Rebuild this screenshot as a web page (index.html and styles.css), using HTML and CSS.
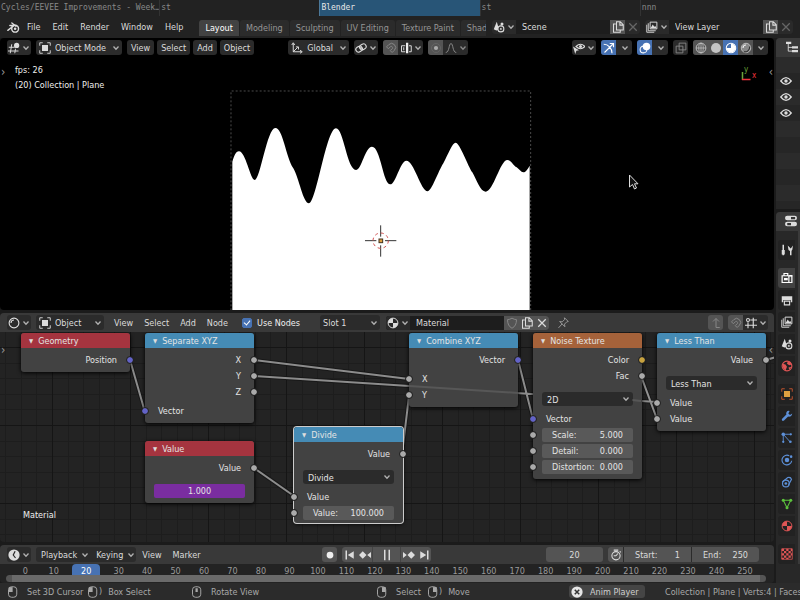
FILE: index.html
```html
<!DOCTYPE html>
<html lang="en">
<head>
<meta charset="utf-8">
<title>Blender</title>
<link rel="stylesheet" href="styles.css">
</head>
<body>
<svg class="defs" aria-hidden="true">
  <symbol id="chev" viewBox="0 0 8 8"><path d="M1.500 2.500 4 5.200 6.500 2.500" fill="none" stroke="currentColor" stroke-width="1.300"/></symbol>
  <symbol id="logo" viewBox="0 0 16 16"><path d="M1 11.500 8.500 5.500H3.500M6 2.500l5 4" fill="none" stroke="currentColor" stroke-width="1.700" stroke-linecap="round"/><circle cx="10" cy="9.500" r="4.200" fill="none" stroke="currentColor" stroke-width="1.800"/><circle cx="10" cy="9.500" r="1.600" fill="currentColor"/></symbol>
  <symbol id="view3d" viewBox="0 0 16 16"><path d="M1 7h8M0 12h14M5 3 3 15M10 9l-1 6" fill="none" stroke="currentColor" stroke-width="1.300"/><circle cx="11.500" cy="4.500" r="3.500" fill="currentColor"/></symbol>
  <symbol id="object" viewBox="0 0 16 16"><path d="M1 5V1h4M11 1h4v4M15 11v4h-4M5 15H1v-4" fill="none" stroke="currentColor" stroke-width="1.200"/><path d="M4 4h8v8H4z" fill="var(--fill, currentColor)"/></symbol>
  <symbol id="axes" viewBox="0 0 16 16"><path d="M3 2v11h11M3 13l6-6M1 4l2-3 2 3M12 11l3 2-3 2M6.500 6.500H10V10" fill="none" stroke="currentColor" stroke-width="1.300"/></symbol>
  <symbol id="pivot" viewBox="0 0 16 16"><rect x="1" y="6" width="9" height="7" rx="3.500" transform="rotate(-30 5.500 9.500)" fill="none" stroke="currentColor" stroke-width="1.500"/><rect x="6" y="3" width="9" height="7" rx="3.500" transform="rotate(-30 10.500 6.500)" fill="none" stroke="currentColor" stroke-width="1.500"/><circle cx="8" cy="8" r="1.300" fill="currentColor"/></symbol>
  <symbol id="magnet" viewBox="0 0 16 16"><path d="M2 6.500 5 3.500a5.300 5.300 0 0 1 7.500 7.500L9.500 14 7 11.500l3-3a1.900 1.900 0 0 0-2.500-2.500L4.500 9zM7.500 13" fill="none" stroke="currentColor" stroke-width="1.300"/></symbol>
  <symbol id="snapinc" viewBox="0 0 16 16"><path d="M7 5H2v8h5M5 7v4M12 5h3v8h-3" fill="none" stroke="currentColor" stroke-width="1.300"/><path d="M8 1h3v14H8z" fill="#eee"/></symbol>
  <symbol id="prop" viewBox="0 0 16 16"><circle cx="8" cy="8" r="6" fill="none" stroke="currentColor" stroke-width=".8" opacity=".5"/><circle cx="8" cy="8" r="2.800" fill="#aaa"/></symbol>
  <symbol id="falloff" viewBox="0 0 16 16"><path d="M1 14c5 0 4-12 7-12s2 12 7 12" fill="none" stroke="currentColor" stroke-width="1.300"/></symbol>
  <symbol id="visib" viewBox="0 0 16 16"><path d="M4 6Q10 0 16 6 10 12 4 6z" fill="none" stroke="currentColor" stroke-width="1.500"/><circle cx="10" cy="6" r="2" fill="currentColor"/><path d="M0 6l8 5-3.500.8L3 16z" fill="currentColor"/></symbol>
  <symbol id="gizmo" viewBox="0 0 16 16"><path d="M1 3c6 0 11 5 11 12M2 14 13 3M9 2h5v5" fill="none" stroke="currentColor" stroke-width="1.500"/></symbol>
  <symbol id="overlay" viewBox="0 0 16 16"><circle cx="10" cy="6" r="5" fill="currentColor"/><circle cx="6" cy="10" r="4.500" fill="none" stroke="currentColor" stroke-width="1.400"/></symbol>
  <symbol id="xray" viewBox="0 0 16 16"><path d="M1.500 5.500h9v9h-9zM5.500 1.500h9v9h-9z" fill="none" stroke="currentColor" stroke-width="1.200"/></symbol>
  <symbol id="wire" viewBox="0 0 16 16"><circle cx="8" cy="8" r="6.500" fill="none" stroke="currentColor" stroke-width="1.200"/><ellipse cx="8" cy="8" rx="3" ry="6.500" fill="none" stroke="currentColor"/><path d="M1.500 8h13M8 1.500v13" stroke="currentColor"/></symbol>
  <symbol id="solid" viewBox="0 0 16 16"><circle cx="8" cy="8" r="6.700" fill="currentColor"/></symbol>
  <symbol id="mat" viewBox="0 0 16 16"><circle cx="8" cy="8" r="6.500" fill="none" stroke="currentColor" stroke-width="1.300"/><path d="M8 1.500A6.500 6.500 0 0 0 1.500 8H8z" fill="currentColor"/><path d="M8 8h6.500A6.500 6.500 0 0 1 8 14.500z" fill="currentColor"/></symbol>
  <symbol id="look" viewBox="0 0 16 16"><circle cx="8" cy="8" r="6.300" fill="none" stroke="currentColor" stroke-width="1.400"/><path d="M2 8h6V2a6 6 0 0 1 5.500 8A6 6 0 0 1 2 8z" fill="currentColor"/></symbol>
  <symbol id="rend" viewBox="0 0 16 16"><circle cx="8" cy="8" r="6.300" fill="#888" stroke="currentColor" stroke-width="1.200"/><path d="M4 8a4 4 0 0 1 4-4" fill="none" stroke="#eee" stroke-width="1.500"/><path d="M5 13c5 1 8-3 8-7" fill="none" stroke="#333" stroke-width="1.500"/></symbol>
  <symbol id="scene" viewBox="0 0 16 16"><path d="M5 1 1 11q4 3 7 0z" fill="currentColor"/><circle cx="12" cy="4" r="2" fill="currentColor"/><circle cx="10.500" cy="10.500" r="4" fill="#333" stroke="currentColor" stroke-width="1.400"/><circle cx="10.500" cy="10.500" r="1.200" fill="currentColor"/></symbol>
  <symbol id="layers" viewBox="0 0 16 16"><path d="M1 5v10h10M3 3v10h10" fill="none" stroke="currentColor" stroke-width="1.200"/><path d="M5.500 1.500h9v9h-9z" fill="none" stroke="currentColor" stroke-width="1.300"/><path d="m6 9.500 3-5 2 3 1.500-1L14 9.500z" fill="currentColor"/></symbol>
  <symbol id="copy" viewBox="0 0 16 16"><path d="M5 4H2v11h9v-3M6 1h5l4 4v7H6zM10.500 1v4.500H15" fill="none" stroke="currentColor" stroke-width="1.400"/></symbol>
  <symbol id="x" viewBox="0 0 16 16"><path d="m3 3 10 10M13 3 3 13" fill="none" stroke="currentColor" stroke-width="1.700"/></symbol>
  <symbol id="shader" viewBox="0 0 16 16"><circle cx="8" cy="8" r="6.500" fill="none" stroke="currentColor" stroke-width="1.500"/><path d="M4 8a4 4 0 0 1 4-4" fill="none" stroke="currentColor" stroke-width="1.500"/></symbol>
  <symbol id="shield" viewBox="0 0 16 16"><path d="M8 1.500q3 2 6 2Q14 12 8 15 2 12 2 3.500q3 0 6-2z" fill="none" stroke="currentColor" stroke-width="1.300"/></symbol>
  <symbol id="pin" viewBox="0 0 16 16"><path d="m10 1 5 5-2 .5-3 3 .5 3.500L3.500 6 7 6.500l3-3zM7 9l-5 5.500" fill="none" stroke="currentColor" stroke-width="1.300"/></symbol>
  <symbol id="up" viewBox="0 0 16 16"><path d="M13 14H8V2M4 6l4-4 4 4" fill="none" stroke="currentColor" stroke-width="1.300"/></symbol>
  <symbol id="grid" viewBox="0 0 16 16"><circle cx="4" cy="4" r="2" fill="none" stroke="currentColor" stroke-width="1.400"/><path d="M7 4h9M0 11h16M4 7v8M11 1v14" fill="none" stroke="currentColor" stroke-width="1.500"/></symbol>
  <symbol id="clock" viewBox="0 0 16 16"><circle cx="8" cy="8" r="7.500" fill="currentColor"/><path d="M9.500 3 7 8l3 4" fill="none" stroke="#282828" stroke-width="1.600"/></symbol>
  <symbol id="stopw" viewBox="0 0 16 16"><circle cx="8" cy="9" r="5.500" fill="none" stroke="currentColor" stroke-width="1.400"/><path d="M5 1.500h6M13 3l1.500 1.500M8 9l2.500-3M5 9h3" fill="none" stroke="currentColor" stroke-width="1.400"/></symbol>
  <symbol id="first" viewBox="0 0 16 16"><path d="M2 2h2v12H2zM13 3v10L5 8z" fill="currentColor"/></symbol>
  <symbol id="prevkey" viewBox="0 0 16 16"><path d="m5 3 5 5-5 5-5-5zM16 4v8l-5-4z" fill="currentColor"/></symbol>
  <symbol id="pause" viewBox="0 0 16 16"><path d="M4 1h2v14H4zM10 1h2v14h-2z" fill="currentColor"/></symbol>
  <symbol id="outl" viewBox="0 0 16 16"><path d="M0 1h7v3H0zM8 7h8v3H8zM8 12h8v3H8z" fill="currentColor"/><path d="M3 4v9.500h5M3 8.500h5" fill="none" stroke="currentColor" stroke-width="1.200"/></symbol>
  <symbol id="eye" viewBox="0 0 16 16"><path d="M1 8q7-9 14 0-7 9-14 0z" fill="none" stroke="currentColor" stroke-width="1.700"/><circle cx="8" cy="8" r="2.300" fill="currentColor"/></symbol>
  <symbol id="props" viewBox="0 0 16 16"><rect x="0" y="1" width="16" height="6" rx="3" fill="currentColor"/><rect x="0" y="9" width="16" height="6" rx="3" fill="currentColor"/><path d="M8 2.500h5.500v3H8zM3 10.500h5v3H3z" fill="#333"/></symbol>
  <symbol id="tool" viewBox="0 0 16 16"><path d="M3 1v7M3 8v7M13 9v6" fill="none" stroke="currentColor" stroke-width="2"/><path d="M1 8h4v6H1zM9 2l4 4 3-4-1 6-2 2-3-2z" fill="currentColor"/></symbol>
  <symbol id="render" viewBox="0 0 16 16"><path d="M1.500 5h9v9h-9zM10.500 5h4v9h-4M4 5V2h5v3" fill="none" stroke="currentColor" stroke-width="1.600"/><path d="M11 4h4v2h-4zM4 8h5v3H4z" fill="currentColor"/></symbol>
  <symbol id="output" viewBox="0 0 16 16"><path d="M1 3h14v8h-2V8H3v3H1z" fill="currentColor"/><path d="M4.500 9.500h7v5h-7z" fill="none" stroke="currentColor" stroke-width="1.500"/></symbol>
  <symbol id="world" viewBox="0 0 16 16"><circle cx="8" cy="8" r="6.500" fill="none" stroke="currentColor" stroke-width="1.500"/><path d="M2 5l4 1 2 3-2 5-3-3zM9 2l-1 3 3 2 3-1-2-4zM10 10l4-1-3 4z" fill="currentColor"/></symbol>
  <symbol id="wrench" viewBox="0 0 16 16"><path d="M15 4.500 12 6.500 9.800 4.500 11.500 1.200Q8 0 7 3.500q-.3 1.500.2 2.500L1.500 11.500q-1 1.500 0 2.500t2.500 0L9.500 8.800Q14 9.500 15 4.500z" fill="currentColor"/></symbol>
  <symbol id="parts" viewBox="0 0 16 16"><circle cx="3" cy="3" r="2.300" fill="currentColor"/><path d="M3 3v11M3 3h11M3 3l9 10" fill="none" stroke="currentColor" stroke-width="1.200"/><circle cx="13" cy="3" r="1.500" fill="currentColor"/><circle cx="3" cy="13" r="1.500" fill="currentColor"/><circle cx="12.500" cy="13" r="1.800" fill="currentColor"/></symbol>
  <symbol id="phys" viewBox="0 0 16 16"><path d="M11 2.300A6.500 6.500 0 1 0 14.300 9" fill="none" stroke="currentColor" stroke-width="1.500"/><circle cx="8" cy="8" r="3" fill="currentColor"/><circle cx="13.500" cy="3.500" r="1.700" fill="currentColor"/></symbol>
  <symbol id="constr" viewBox="0 0 16 16"><path d="M2 8 9 2q4-1 5 2.500L10 12" fill="none" stroke="currentColor" stroke-width="1.500"/><circle cx="6.500" cy="10" r="4.500" fill="none" stroke="currentColor" stroke-width="1.500"/><circle cx="6.500" cy="10" r="1.800" fill="currentColor"/></symbol>
  <symbol id="data" viewBox="0 0 16 16"><path d="M3 3h10L8 13z" fill="none" stroke="currentColor" stroke-width="1.400"/><circle cx="3" cy="3" r="2" fill="currentColor"/><circle cx="13" cy="3" r="2" fill="currentColor"/><circle cx="8" cy="13" r="2" fill="currentColor"/></symbol>
  <symbol id="checker" viewBox="0 0 16 16"><path d="M1 1h14v14H1z" fill="none" stroke="currentColor"/><path d="M1 1h3v3H1zM7 1h3v3H7zM13 1h2v3h-2zM4 4h3v3H4zM10 4h3v3h-3zM1 7h3v3H1zM7 7h3v3H7zM13 7h2v3h-2zM4 10h3v3H4zM10 10h3v3h-3zM1 13h3v2H1zM7 13h3v2H7z" fill="currentColor"/></symbol>
  <symbol id="mouseL" viewBox="0 0 16 16"><rect x="2" y="1" width="11" height="14" rx="4" fill="none" stroke="currentColor" stroke-width="1.300"/><path d="M2.500 1.500h5V8h-5z" fill="currentColor"/></symbol>
  <symbol id="mouseM" viewBox="0 0 16 16"><rect x="2" y="1" width="11" height="14" rx="4" fill="none" stroke="currentColor" stroke-width="1.300"/><path d="M6 3h3v5H6z" fill="currentColor"/></symbol>
  <symbol id="mouseR" viewBox="0 0 16 16"><rect x="2" y="1" width="11" height="14" rx="4" fill="none" stroke="currentColor" stroke-width="1.300"/><path d="M8 1.500h5V8H8z" fill="currentColor"/></symbol>
</svg>

<nav class="wm">
  <a href="#">Cycles/EEVEE Improvements - Week…</a><a href="#">st</a><a href="#" class="on">Blender</a><a href="#">st</a><a href="#">nnn</a>
</nav>

<header class="top">
  <svg class="logo"><use href="#logo"/></svg>
  <nav class="menus"><button>File</button><button>Edit</button><button>Render</button><button>Window</button><button>Help</button></nav>
  <nav class="tabs"><button class="on">Layout</button><button>Modeling</button><button>Sculpting</button><button>UV Editing</button><button>Texture Paint</button><button>Shading</button></nav>
  <div class="ids">
    <div class="id"><button class="pick" aria-label="Browse scene"><svg><use href="#scene"/></svg><svg class="chev"><use href="#chev"/></svg></button><input aria-label="Scene" value="Scene"><button class="lit" aria-label="New scene"><svg><use href="#copy"/></svg></button><button class="dim" aria-label="Delete scene"><svg><use href="#x"/></svg></button></div>
    <div class="id"><button class="pick" aria-label="Browse view layer"><svg><use href="#layers"/></svg><svg class="chev"><use href="#chev"/></svg></button><input aria-label="View layer" value="View Layer"><button class="lit" aria-label="New view layer"><svg><use href="#copy"/></svg></button><button class="dim" aria-label="Delete view layer"><svg><use href="#x"/></svg></button></div>
  </div>
</header>

<main class="work">
  <div class="editors">
    <section class="view3d">
      <svg class="render" viewBox="0 0 774 272" preserveAspectRatio="xMidYMin slice" aria-hidden="true">
        <g transform="translate(225 47) scale(.33333)">
          <path fill="#fff" d="M22 230C28 212 32 199 42 199C62 199 76 285 89 285C106 285 126 129 151 129C174 129 182 215 205 250C222 278 234 355 252 355C274 355 304 130 333 130C356 130 366 255 393 255C410 255 420 185 441 185C467 185 474 298 496 298C512 298 526 227 544 227C567 227 588 319 608 319C620 319 640 258 655 235C670 206 682 173 692 173C704 173 730 245 742 262C755 285 766 320 782 320C805 320 826 225 847 225C858 225 866 244 875 247C882 252 888 262 895 262C903 262 909 250 914 242V700H22Z"/>
          <path d="M18 700V18H917V700" fill="none" stroke="#4a4a4a" stroke-width="3" stroke-dasharray="6 6"/>
          <path d="M467 421v34M467 481v34M420 467h34M480 467h34" stroke="#333" stroke-width="3"/>
          <circle cx="467" cy="467" r="23" fill="none" stroke="#d05050" stroke-width="3" stroke-dasharray="9 9"/>
          <rect x="462" y="462" width="11" height="11" fill="#e0a040" stroke="#443320" stroke-width="3"/>
        </g>
        <path d="M629.500 137v12l3-2.500 2 4.500 2-1-2-4.200h3.500z" fill="#111" stroke="#ddd"/>
      </svg>
      <header class="bar">
        <button class="btn pick" aria-label="Editor type"><svg><use href="#view3d"/></svg><svg class="chev"><use href="#chev"/></svg></button>
        <label class="dd mode"><svg><use href="#object"/></svg><select aria-label="Mode"><option>Object Mode</option></select><svg class="chev"><use href="#chev"/></svg></label>
        <nav class="pills"><button class="btn">View</button><button class="btn">Select</button><button class="btn">Add</button><button class="btn">Object</button></nav>
        <div class="mid">
          <label class="dd orient"><svg><use href="#axes"/></svg><select aria-label="Orientation"><option>Global</option></select><svg class="chev"><use href="#chev"/></svg></label>
          <button class="btn pick" aria-label="Pivot"><svg><use href="#pivot"/></svg><svg class="chev"><use href="#chev"/></svg></button>
          <div class="group"><button class="lit faint" aria-label="Snap"><svg><use href="#magnet"/></svg></button><button class="pick" aria-label="Snap to"><svg><use href="#snapinc"/></svg><svg class="chev"><use href="#chev"/></svg></button></div>
          <div class="group"><button class="lit faint" aria-label="Proportional editing"><svg><use href="#prop"/></svg></button><button class="pick faint" aria-label="Falloff"><svg><use href="#falloff"/></svg><svg class="chev"><use href="#chev"/></svg></button></div>
        </div>
        <div class="right">
          <button class="btn pick" aria-label="Visibility"><svg><use href="#visib"/></svg><svg class="chev"><use href="#chev"/></svg></button>
          <div class="group"><button class="blue" aria-label="Gizmos"><svg><use href="#gizmo"/></svg></button><button aria-label="Gizmo options"><svg class="chev"><use href="#chev"/></svg></button></div>
          <div class="group"><button class="blue" aria-label="Overlays"><svg><use href="#overlay"/></svg></button><button aria-label="Overlay options"><svg class="chev"><use href="#chev"/></svg></button></div>
          <div class="group"><button class="faint" aria-label="X-ray"><svg><use href="#xray"/></svg></button></div>
          <div class="group shade"><button class="lit soft" aria-label="Wireframe"><svg><use href="#wire"/></svg></button><button class="lit soft" aria-label="Solid"><svg><use href="#solid"/></svg></button><button class="blue" aria-label="Look dev"><svg><use href="#look"/></svg></button><button class="lit soft" aria-label="Rendered"><svg><use href="#rend"/></svg></button><button aria-label="Shading options"><svg class="chev"><use href="#chev"/></svg></button></div>
        </div>
      </header>
      <div class="info"><p>fps: 26</p><p>(20) Collection | Plane</p></div>
      <svg class="gizmo" viewBox="0 0 20 20" aria-hidden="true"><path d="M3.500 7v8" stroke="#6ba53a" stroke-width="1.500"/><path d="M3 14.500h8.500" stroke="#f2333d" stroke-width="1.500"/><text x="5" y="7" fill="#6ba53a">y</text><text x="13" y="13" fill="#f2333d">x</text></svg>
      <span class="edge l">›</span><span class="edge r">‹</span>
    </section>

    <section class="nodes">
      <header class="bar">
        <button class="btn pick" aria-label="Editor type"><svg><use href="#shader"/></svg><svg class="chev"><use href="#chev"/></svg></button>
        <label class="dd stype"><svg><use href="#object"/></svg><select aria-label="Shader type"><option>Object</option></select><svg class="chev"><use href="#chev"/></svg></label>
        <nav class="menus"><button>View</button><button>Select</button><button>Add</button><button>Node</button></nav>
        <label class="check"><input type="checkbox" checked>Use Nodes</label>
        <label class="dd slot"><select aria-label="Slot"><option>Slot 1</option></select><svg class="chev"><use href="#chev"/></svg></label>
        <div class="id"><button class="pick" aria-label="Browse material"><svg><use href="#mat"/></svg><svg class="chev"><use href="#chev"/></svg></button><input aria-label="Material name" value="Material"><button class="lit faint" aria-label="Fake user"><svg><use href="#shield"/></svg></button><button class="lit" aria-label="New material"><svg><use href="#copy"/></svg></button><button class="lit" aria-label="Unlink"><svg><use href="#x"/></svg></button></div>
        <button class="plain" aria-label="Pin"><svg><use href="#pin"/></svg></button>
        <div class="right">
          <div class="group"><button class="lit faint" aria-label="Parent tree"><svg><use href="#up"/></svg></button></div>
          <div class="group"><button class="lit faint" aria-label="Snap"><svg><use href="#magnet"/></svg></button><button class="pick" aria-label="Snap element"><svg><use href="#grid"/></svg><svg class="chev"><use href="#chev"/></svg></button></div>
        </div>
      </header>
      <div class="canvas">
        <svg class="layer" aria-hidden="true">
          <defs><pattern id="g" width="78" height="78" patternUnits="userSpaceOnUse" x="52" y="15"><path d="M16.500 0v78M31.500 0v78M47.500 0v78M62.500 0v78M0 16.500h78M0 31.500h78M0 47.500h78M0 62.500h78" stroke="#1d1d1d"/><path d="M.5 0v78M0 .5h78" stroke="#151515"/></pattern></defs>
          <rect width="100%" height="100%" fill="url(#g)"/>
          <g fill="none" stroke="#181818" stroke-width="4"><path id="links" d="M130 28 145 80M254 28 409 47M254 44 657 70M254 136 294 164M402 122 409 64M518 28 533 87M641 44 657 87M766 28 776 25"/></g>
          <path d="M130 28 145 80M254 28 409 47M254 44 657 70M254 136 294 164M402 122 409 64M518 28 533 87M641 44 657 87M766 28 776 25" fill="none" stroke="#8c8c8c" stroke-width="2"/>
        </svg>

        <article class="node geo red"><h3>Geometry</h3><div class="out">Position<i class="vec"></i></div></article>
        <article class="node sep blueh"><h3>Separate XYZ</h3><div class="out">X<i></i></div><div class="out">Y<i></i></div><div class="out">Z<i></i></div><div class="in gap">Vector<i class="vec"></i></div></article>
        <article class="node val red"><h3>Value</h3><div class="out">Value<i></i></div><div class="row gap"><input class="num purple" aria-label="Value" value="1.000"></div></article>
        <article class="node div blueh sel"><h3>Divide</h3><div class="out">Value<i></i></div><label class="row gap pick2"><select aria-label="Operation"><option>Divide</option></select><svg class="chev"><use href="#chev"/></svg></label><div class="in">Value<i></i></div><div class="row"><label class="num"><span>Value:</span><input value="100.000"></label><i></i></div></article>
        <article class="node com blueh"><h3>Combine XYZ</h3><div class="out">Vector<i class="vec"></i></div><div class="in gap">X<i></i></div><div class="in">Y<i></i></div></article>
        <article class="node noi orange"><h3>Noise Texture</h3><div class="out">Color<i class="col"></i></div><div class="out">Fac<i></i></div><label class="row gap pick2"><select aria-label="Dimensions"><option>2D</option></select><svg class="chev"><use href="#chev"/></svg></label><div class="in">Vector<i class="vec"></i></div><div class="row"><label class="num"><span>Scale:</span><input value="5.000"></label><i></i></div><div class="row"><label class="num"><span>Detail:</span><input value="0.000"></label><i></i></div><div class="row"><label class="num"><span>Distortion:</span><input value="0.000"></label><i></i></div></article>
        <article class="node les blueh"><h3>Less Than</h3><div class="out">Value<i></i></div><label class="row gap pick2"><select aria-label="Operation"><option>Less Than</option></select><svg class="chev"><use href="#chev"/></svg></label><div class="in">Value<i></i></div><div class="in">Value<i></i></div></article>

        <svg class="layer over" aria-hidden="true"><path d="M409 54 518 61M632 68 641 69M641 44 657 87" stroke="#aaa" stroke-width="2"/></svg>
        <p class="mat">Material</p>
        <span class="edge l">›</span><span class="edge r">‹</span>
      </div>
    </section>

    <section class="time">
      <header class="bar">
        <button class="btn pick" aria-label="Editor type"><svg><use href="#clock"/></svg><svg class="chev"><use href="#chev"/></svg></button>
        <div class="group words"><button>Playback<svg class="chev"><use href="#chev"/></svg></button><button>Keying<svg class="chev"><use href="#chev"/></svg></button></div>
        <nav class="menus"><button>View</button><button>Marker</button></nav>
        <div class="play">
          <div class="group"><button class="lit" aria-label="Auto keying"><svg viewBox="0 0 16 16"><circle cx="8" cy="8" r="4.500" fill="#eee"/></svg></button></div>
          <div class="group"><button class="lit" aria-label="Jump to start"><svg><use href="#first"/></svg></button><button class="lit" aria-label="Previous keyframe"><svg><use href="#prevkey"/></svg></button><button class="lit wide" aria-label="Pause"><svg><use href="#pause"/></svg></button><button class="lit" aria-label="Next keyframe"><svg class="flip"><use href="#prevkey"/></svg></button><button class="lit" aria-label="Jump to end"><svg class="flip"><use href="#first"/></svg></button></div>
        </div>
        <div class="right range">
          <input class="cur" aria-label="Current frame" value="20">
          <div class="group"><button class="lit" aria-label="Use preview range"><svg><use href="#stopw"/></svg></button><label><span>Start:</span><input value="1"></label><label><span>End:</span><input value="250"></label></div>
        </div>
      </header>
      <div class="ruler"><span>0</span><span>10</span><span class="head">20</span><span>30</span><span>40</span><span>50</span><span>60</span><span>70</span><span>80</span><span>90</span><span>100</span><span>110</span><span>120</span><span>130</span><span>140</span><span>150</span><span>160</span><span>170</span><span>180</span><span>190</span><span>200</span><span>210</span><span>220</span><span>230</span><span>240</span><span>250</span></div>
      <div class="scroll"><b></b></div>
    </section>
  </div>

  <aside class="side">
    <section class="outliner"><div class="hd"><svg><use href="#outl"/></svg></div><div class="rows"><svg><use href="#eye"/></svg><svg><use href="#eye"/></svg><svg><use href="#eye"/></svg></div></section>
    <section class="props">
      <div class="hd"><svg><use href="#props"/></svg></div>
      <nav class="ptabs">
        <button aria-label="Tool"><svg><use href="#tool"/></svg></button>
        <button class="on brk" aria-label="Render"><svg><use href="#render"/></svg></button>
        <button aria-label="Output"><svg><use href="#output"/></svg></button>
        <button aria-label="View layer"><svg><use href="#layers"/></svg></button>
        <button aria-label="Scene"><svg><use href="#scene"/></svg></button>
        <button class="cr" aria-label="World"><svg><use href="#world"/></svg></button>
        <button class="co brk" aria-label="Object"><svg><use href="#object"/></svg></button>
        <button class="cb" aria-label="Modifiers"><svg><use href="#wrench"/></svg></button>
        <button class="cb" aria-label="Particles"><svg><use href="#parts"/></svg></button>
        <button class="cb" aria-label="Physics"><svg><use href="#phys"/></svg></button>
        <button class="cb" aria-label="Constraints"><svg><use href="#constr"/></svg></button>
        <button class="cg" aria-label="Object data"><svg><use href="#data"/></svg></button>
        <button class="cr" aria-label="Material"><svg><use href="#mat"/></svg></button>
        <button class="cr brk" aria-label="Texture"><svg><use href="#checker"/></svg></button>
      </nav>
    </section>
  </aside>
</main>

<footer class="status">
  <span class="h1"><svg><use href="#mouseL"/></svg>Set 3D Cursor</span>
  <span class="h2"><svg><use href="#mouseL"/></svg><em>)</em>Box Select</span>
  <span class="h3"><svg><use href="#mouseM"/></svg>Rotate View</span>
  <span class="h4"><svg><use href="#mouseR"/></svg>Select</span>
  <span class="h5"><svg><use href="#mouseR"/></svg><em>)</em>Move</span>
  <button class="anim"><svg viewBox="0 0 16 16"><circle cx="8" cy="8" r="7.500" fill="#e6e6e6"/><path d="m5 5 6 6M11 5l-6 6" stroke="#333" stroke-width="2"/></svg>Anim Player</button>
  <span class="stats">Collection | Plane | Verts:4 | Faces:1</span>
</footer>
</body>
</html>
```
FILE: styles.css
```css
* { box-sizing: border-box; }
html, body { height: 100%; margin: 0; }
body {
  display: flex; flex-direction: column; overflow: hidden;
  background: #1b1b1b; color: #dcdcdc;
  font: 9px/12px "DejaVu Sans Condensed", "DejaVu Sans", sans-serif;
}
button, input, select {
  font: inherit; color: inherit; background: none; border: 0; padding: 0; margin: 0;
  border-radius: 0; appearance: none; outline: 0; min-width: 0;
}
p, h3 { margin: 0; font: inherit; }
svg { width: 12px; height: 12px; flex: none; display: block; }
svg.chev { width: 8px; height: 8px; color: #b0b0b0; }
.defs { position: absolute; width: 0; height: 0; }
.flip { transform: scaleX(-1); }

.wm { display: flex; flex: none; height: 16px; background: #222; font: 8px/15px "DejaVu Sans Mono", monospace; }
.wm a { flex: 1 1 0; min-width: 0; padding-left: 1px; color: #888; text-decoration: none; white-space: nowrap; overflow: hidden; border-left: 1px solid #333; }
.wm a:first-child { border-left: 0; }
.wm a.on { background: #285577; color: #e8e8e8; border-color: #4c7899; }

.top { display: flex; flex: none; height: 22px; align-items: center; background: #222; white-space: nowrap; }
.top .logo { width: 13px; height: 13px; margin-left: 7px; }
.menus { display: flex; flex: none; gap: 11px; }
.top .menus { margin: 0 0 0 7px; gap: 12px; }
.tabs { display: flex; align-self: flex-end; margin: 0 6px 2px 16px; flex: 1 1 0; min-width: 0; overflow: hidden; gap: 1px; }
.tabs button { flex: none; height: 16px; padding: 0 6px; background: #2b2b2b; color: #969696; border-radius: 3px 3px 0 0; }
.tabs button.on { background: #424242; color: #fff; }
.ids { display: flex; gap: 5px; margin-right: 7px; flex: none; }
.id { display: flex; height: 14px; flex: none; background: #1d1d1d; border-radius: 3px; overflow: hidden; }
.id input { width: 94px; padding-left: 6px; }
.id button, .group button { display: flex; align-items: center; justify-content: center; width: 15px; flex: none; }
.id .pick, .group .pick { width: 24px; gap: 2px; }
.id .pick { background: #2a2a2a; }
.id .lit, .group .lit { background: #545454; }
.dim { color: #666; background: #2a2a2a; }
.faint, .faint .chev { color: #888; }
.soft { color: #c4c4c4; }
.group .blue { background: #4772b3; color: #fff; }

.work { display: flex; flex: 1 1 0; min-height: 0; gap: 2px; }
.editors { display: flex; flex-direction: column; flex: 1 1 0; min-width: 0; gap: 3px; }
.editors > section { position: relative; overflow: hidden; border-radius: 4px; }
.view3d { flex: 272 1 0; background: #000; }
.nodes { flex: 229 1 0; background: #232323; display: flex; flex-direction: column; }
.time { flex: 0 0 38px; background: #232323; display: flex; flex-direction: column; }

.bar { position: relative; display: flex; flex: none; align-items: center; height: 19px; padding: 0 6px 0 7px; white-space: nowrap; }
.nodes .bar, .time .bar { background: #393939; }
.btn, .group, .dd { background: #2b2b2b; border-radius: 3px; height: 15px; flex: none; }
.btn.pick { display: flex; align-items: center; justify-content: center; width: 24px; gap: 2px; }
.dd { display: flex; align-items: center; gap: 4px; padding: 0 2px 0 3px; }
.dd select { flex: 1 1 0; }
.group { display: flex; overflow: hidden; gap: 1px; }
.group button { height: 15px; }
.mode { width: 86px; margin-left: 5px; }
.pills { display: flex; gap: 3px; margin-left: 5px; }
.pills .btn { padding: 0 4px; }
.mid, .right { display: flex; gap: 5px; flex: none; }
.mid { margin-left: 34px; }
.orient { width: 61px; }
.right { margin-left: auto; }
.shade { gap: 0; }

.render { position: absolute; inset: 0; width: 100%; height: 100%; }
.info { position: relative; padding: 6px 15px; color: #eee; }
.info p { line-height: 15px; }
.gizmo { position: absolute; top: 27px; right: 15px; width: 20px; height: 20px; font-size: 8px; }
.edge { position: absolute; top: 28px; color: #999; font-size: 12px; }
.edge.l { left: 1px; }
.edge.r { right: 1px; }

.stype { width: 68px; margin-left: 5px; }
.nodes .menus { margin-left: 10px; }
.check { display: flex; align-items: center; gap: 5px; margin-left: 14px; color: #eee; }
.check input { width: 10px; height: 10px; border-radius: 2px; position: relative; border: 1px solid #555; }
.check input:checked { background: #4772b3; border-color: #4772b3; }
.check input:checked::after { content: ""; position: absolute; left: 2px; top: 0; width: 3px; height: 5px; border: solid #fff; border-width: 0 1px 1px 0; transform: rotate(40deg); }
.slot { width: 60px; margin: 0 6px 0 20px; }
.plain { margin-left: 8px; color: #999; }

.canvas { position: relative; flex: 1 1 0; overflow: hidden; }
.layer { position: absolute; inset: 0; width: 100%; height: 100%; }
.over { opacity: .2; pointer-events: none; }
.mat { position: absolute; left: 23px; bottom: 21px; color: #eee; }
.canvas .edge { top: 12px; }
.node { position: absolute; width: 109px; padding-bottom: 4px; background: #424242; border-radius: 3px; box-shadow: 0 1px 4px #000; color: #e4e4e4; }
.node h3 { height: 15px; line-height: 15px; padding-left: 8px; margin-bottom: 4px; border-radius: 3px 3px 0 0; }
.node h3::before { content: "▼"; font-size: 6px; margin-right: 5px; color: #ddd; vertical-align: 1px; }
.red h3 { background: #a5343f; }
.blueh h3 { background: #458bb5; }
.orange h3 { background: #a5623a; }
.sel { box-shadow: 0 0 0 1px #ccc, 0 1px 4px #000; }
.out, .in, .row { position: relative; height: 16px; line-height: 16px; }
.out { text-align: right; padding-right: 13px; }
.in { padding-left: 13px; }
.row { display: flex; align-items: center; padding: 0 9px; }
.row.gap { margin: 7px 0 4px; }
.in.gap { margin: 3px 0 0; }
.node i { position: absolute; top: 5px; width: 6px; height: 6px; border-radius: 50%; background: #aaa; outline: 1px solid #222; left: -3px; }
.node .out i { left: auto; right: -3px; }
.node i.vec { background: #6363c7; }
.node i.col { background: #c7a23f; }
.row select { flex: 1 1 0; width: 100%; height: 14px; padding-left: 5px; background: #2b2b2b; border-radius: 3px; }
.row .chev { position: absolute; right: 12px; }
.num { display: flex; width: 100%; height: 14px; line-height: 14px; padding: 0 10px; background: #595959; border-radius: 2px; }
.num input { flex: 1 1 0; width: 0; text-align: right; }
.num.purple { background: #7a2da0; text-align: center; }
.geo { left: 21px; top: 1px; }
.sep { left: 145px; top: 1px; }
.val { left: 145px; top: 109px; padding-bottom: 0; }
.div { left: 294px; top: 95px; padding-bottom: 2px; }
.com { left: 409px; top: 1px; }
.noi { left: 533px; top: 1px; }
.les { left: 657px; top: 1px; }

.words { margin-left: 5px; }
.group.words button { width: auto; padding: 0 1px 0 5px; gap: 4px; }
.time .menus { margin-left: 6px; }
.play { display: flex; gap: 5px; position: absolute; left: calc(50% - 65px); }
.play .group { gap: 0; }
.group .wide { width: 29px; border: solid #444; border-width: 0 1px; }
.range { margin-right: 9px; }
.range input { text-align: center; }
.range label { display: flex; width: 67px; padding: 0 11px; background: #545454; align-items: center; justify-content: space-between; }
.range label input { width: 20px; text-align: right; }
.cur { width: 57px; height: 15px; background: #545454; border-radius: 3px; }
.ruler { display: flex; flex: 1 1 0; min-height: 0; padding: 0 15px 0 11px; color: #9a9a9a; text-align: center; line-height: 15px; }
.ruler span { flex: 1 1 0; min-width: 0; }
.ruler .head { background: #4772b3; color: #fff; margin: 0 4px; border-radius: 4px 4px 0 0; }
.scroll { position: relative; height: 8px; flex: none; padding: 0 8px 1px 6px; background: #232323; }
.scroll b { display: block; height: 7px; border-radius: 4px; background: #6a6a6a; border: solid #555; border-width: 0 6px; }

.side { display: flex; flex-direction: column; flex: 0 0 24px; gap: 3px; }
.side section { background: #282828; border-radius: 4px 0 0 0; overflow: hidden; }
.outliner { flex: 0 0 171px; }
.hd { height: 19px; padding: 3px 0 0 10px; background: #393939; }
.rows { height: 152px; padding: 18px 0 0 4px; display: flex; flex-direction: column; gap: 4px; background: repeating-linear-gradient(#2b2b2b 0 16px, #262626 16px 32px); }
.props { flex: 1 1 0; }
.props .hd { padding-left: 9px; }
.ptabs { display: flex; flex-direction: column; gap: 2px; padding: 9px 3px 0 2px; border-right: 2px solid #3a3a3a; }
.ptabs button { height: 20px; flex: none; background: #222; display: flex; align-items: center; justify-content: center; border-radius: 3px 0 0 3px; }
.ptabs .on { background: #424242; color: #fff; }
.ptabs .brk { margin-top: 6px; }
.cr { color: #e05555; }
.co { color: #c9552f; --fill: #e0a040; }
.cb { color: #5d90d8; }
.cg { color: #5cc23c; }

.status { display: flex; flex: none; align-items: center; height: 17px; padding-left: 7px; background: #2b2b2b; color: #a8a8a8; white-space: nowrap; overflow: hidden; }
.status span { display: flex; align-items: center; flex: none; gap: 8px; }
.status em { font: 8px/10px "DejaVu Sans", sans-serif; margin: 0 -2px 0 -8px; }
.h1 { width: 80px; }
.h2 { width: 104px; }
.h3 { width: 185px; }
.h4 { width: 51px; }
.h5 { width: 142px; }
.anim { display: flex; align-items: center; gap: 7px; width: 76px; height: 13px; padding-left: 2px; background: #454545; border-radius: 3px; color: #d0d0d0; flex: none; }
.status .stats { margin-left: 20px; }
```
